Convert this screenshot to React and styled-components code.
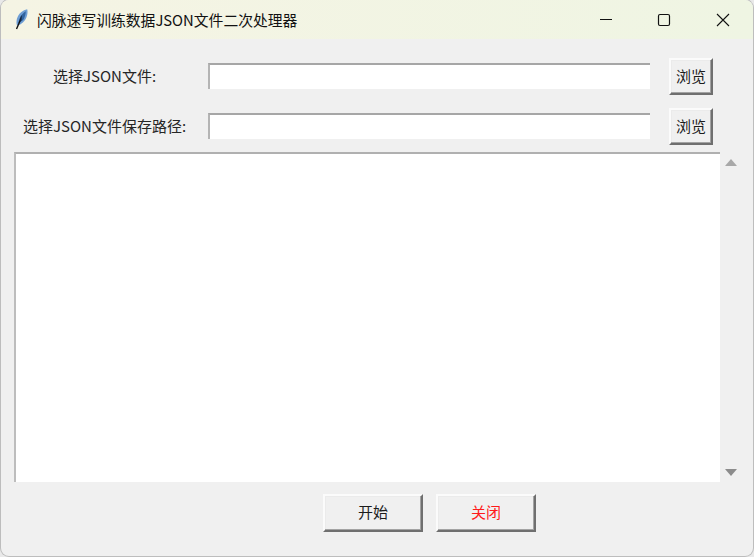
import React from "react";
import styled, { createGlobalStyle } from "styled-components";

const Global = createGlobalStyle`
  html, body { margin: 0; padding: 0; background: #ffffff; }
  #root { width: 754px; height: 557px; overflow: hidden; }
  * { box-sizing: border-box; }
`;

const Desktop = styled.div`
  width: 754px;
  height: 557px;
  padding: 0 1px 0 1px;
  background: #e9e9e9;
`;

const Window = styled.div`
  width: 752px;
  height: 556px;
  display: flex;
  flex-direction: column;
  background: #f0f0f0;
  border-radius: 8px;
  box-shadow: 0 0 0 1px #bdbdbd;
  overflow: hidden;
  font-family: "Noto Sans CJK SC", "Liberation Sans", sans-serif;
  color: #1a1a1a;
`;

const TitleBar = styled.div`
  height: 39px;
  flex: none;
  display: flex;
  align-items: center;
  background: linear-gradient(90deg, #f5f4e4, #eff5e3);
  padding: 0 1px 0 13px;
`;

const TitleText = styled.span`
  margin-left: 7px;
  padding-bottom: 1px;
  font-size: 14.8px;
  white-space: nowrap;
  flex: 1;
  color: #111;
`;

const CaptionButton = styled.div`
  width: 59px;
  height: 39px;
  display: flex;
  align-items: center;
  justify-content: center;
  color: #111;
`;

const Body = styled.div`
  flex: 1;
  display: flex;
  flex-direction: column;
  padding: 19px 0 0 13px;
`;

const FormRow = styled.div`
  height: 37px;
  margin-bottom: 13px;
  display: flex;
  align-items: center;
  &:nth-of-type(2) { margin-bottom: 7px; }
`;

const FieldLabel = styled.label`
  width: 181px;
  flex: none;
  margin-right: 2px;
  padding-bottom: 3px;
  text-align: center;
  font-size: 15px;
  white-space: nowrap;
  color: #262626;
`;

const Entry = styled.input`
  width: 442px;
  height: 26px;
  margin: 0 0 1px 11px;
  padding: 0;
  background: #fff;
  border: 0;
  border-top: 2px solid #a6a6a6;
  border-left: 2px solid #b4b4b4;
  outline: none;
`;

const RaisedButton = styled.button`
  width: ${(p) => p.$w}px;
  height: ${(p) => p.$h}px;
  padding: 0 0 3px;
  background: #f0f0f0;
  border-style: solid;
  border-width: 2px;
  border-color: #fbfbfb #6f6f6f #6f6f6f #fbfbfb;
  box-shadow: inset -1px -1px 0 #a3a3a3, inset 1px 1px 0 #ebebeb;
  font-family: inherit;
  font-size: 15px;
  color: ${(p) => p.$color || "#1c1c1c"};
`;

const BrowseButton = styled(RaisedButton)`
  margin-left: 19px;
`;

const LogRow = styled.div`
  display: flex;
  height: 330px;
`;

const LogArea = styled.div`
  width: 706px;
  background: #fff;
  border-top: 2px solid #b0b0b0;
  border-left: 2px solid #bdbdbd;
`;

const ScrollBar = styled.div`
  width: 21px;
  display: flex;
  flex-direction: column;
  justify-content: space-between;
  align-items: center;
  padding: 7px 0 6px;
`;

const Arrow = styled.div`
  width: 0;
  height: 0;
  border-left: 6px solid transparent;
  border-right: 6px solid transparent;
  ${(p) =>
    p.$up
      ? "border-bottom: 7px solid #a8a8a8;"
      : "border-top: 7px solid #8c8c8c;"}
`;

const Actions = styled.div`
  display: flex;
  gap: 13px;
  padding: 12px 0 0 309px;
`;

const Feather = () => (
  <svg width="16" height="22" viewBox="0 0 16 22">
    <path d="M13.200 .3C9 1 4.500 4.500 3 9.500 2.300 12 2.300 14.800 3 16.500 7.500 15.800 11 12 12.600 8 13.600 5.200 13.800 2.500 13.200 .3z" fill="#6f9ed4" />
    <path d="M11.800 2.200C9.500 3.500 6.800 6.300 5.600 9.500 5 11 4.500 12.800 4.200 14.500l5-3.500c1.600-2.700 2.500-6 2.600-8.800z" fill="#2f639f" />
    <path d="M7.800 6c-1.300 2-2.300 4.500-3 7.500l2.700-2z" fill="#14233a" />
    <path d="M6 12 2.500 20" stroke="#111" strokeWidth="1.400" fill="none" />
  </svg>
);

export default function App() {
  return (
    <>
      <Global />
      <Desktop>
        <Window>
          <TitleBar>
            <Feather />
            <TitleText>闪脉速写训练数据JSON文件二次处理器</TitleText>
            <CaptionButton>
              <svg width="14" height="14" viewBox="0 0 14 14">
                <path d="M2 6.500h12" stroke="currentColor" strokeWidth="1" />
              </svg>
            </CaptionButton>
            <CaptionButton>
              <svg width="14" height="14" viewBox="0 0 14 14">
                <rect x="1.500" y="1.500" width="11" height="11" rx="1.500" fill="none" stroke="currentColor" strokeWidth="1.200" />
              </svg>
            </CaptionButton>
            <CaptionButton>
              <svg width="14" height="14" viewBox="0 0 14 14">
                <path d="M1 1l12 12M13 1L1 13" stroke="currentColor" strokeWidth="1.100" />
              </svg>
            </CaptionButton>
          </TitleBar>
          <Body>
            <FormRow>
              <FieldLabel>选择JSON文件:</FieldLabel>
              <Entry />
              <BrowseButton $w={44} $h={37}>浏览</BrowseButton>
            </FormRow>
            <FormRow>
              <FieldLabel>选择JSON文件保存路径:</FieldLabel>
              <Entry />
              <BrowseButton $w={44} $h={37}>浏览</BrowseButton>
            </FormRow>
            <LogRow>
              <LogArea />
              <ScrollBar>
                <Arrow $up />
                <Arrow />
              </ScrollBar>
            </LogRow>
            <Actions>
              <RaisedButton $w={100} $h={38}>开始</RaisedButton>
              <RaisedButton $w={100} $h={38} $color="#ff1a1a">关闭</RaisedButton>
            </Actions>
          </Body>
        </Window>
      </Desktop>
    </>
  );
}
